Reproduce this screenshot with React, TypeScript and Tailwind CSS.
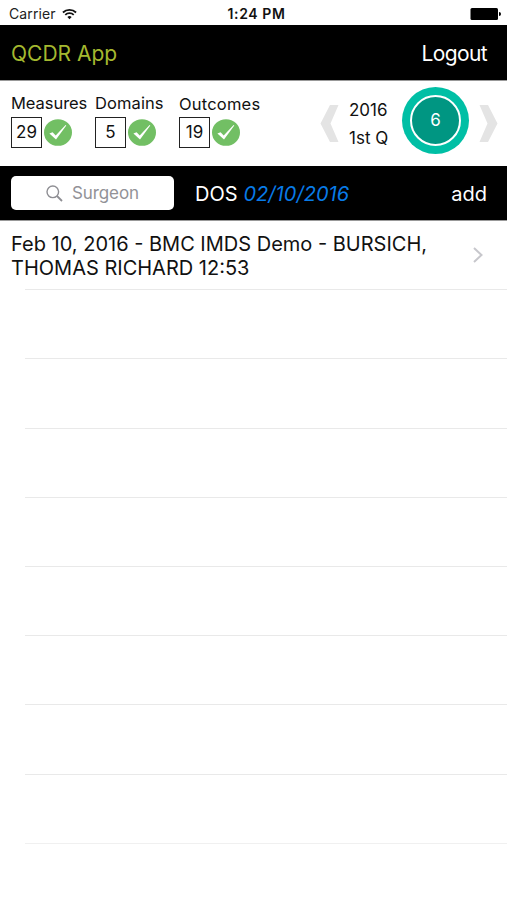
const stats = [
  { label: "Measures", value: 29, labelClass: "tracking-[-0.05px]" },
  { label: "Domains", value: 5, labelClass: "tracking-[0.1px]" },
  { label: "Outcomes", value: 19, labelClass: "relative top-px tracking-[0.2px]" },
];

const emptyRows = Array.from({ length: 8 }, (_, i) => i);

function StatusBar() {
  return (
    <div className="grid h-[25px] grid-cols-3 items-center pt-[2px] text-[14px] text-[#111]">
      <div className="flex items-center gap-1.5 pl-[9px]">
        <span className="tracking-[0.1px] text-[#222]">Carrier</span>
        <svg width="15" height="12" viewBox="0 0 16 12" fill="none" stroke="#111" strokeWidth="1.9">
          <path d="M1 4.4a9.9 9.9 0 0 1 14 0" />
          <path d="M3.5 7a6.4 6.4 0 0 1 9 0" />
          <path d="M8 11.6 5.7 9.2a3.3 3.3 0 0 1 4.6 0z" fill="#111" stroke="none" />
        </svg>
      </div>
      <span className="pl-1.5 text-center font-semibold tracking-[0.6px]">1:24 PM</span>
      <div className="flex justify-end pr-[6px]">
        <svg width="31" height="12" viewBox="0 0 31 12">
          <rect x="0.5" width="27.5" height="12" rx="1.5" fill="#000" />
          <path d="M29 4v4a2 2 0 0 0 0-4z" fill="#000" />
        </svg>
      </div>
    </div>
  );
}

function CheckBadge() {
  return (
    <svg width="28" height="27" viewBox="0 0 28 27">
      <ellipse cx="14" cy="13.5" rx="14" ry="13.3" fill="#72bf64" />
      <path d="M5.4 14.4 8.6 13.2l3.1 3.4L21.6 6l.7.6L12 20.4z" fill="#fff" />
    </svg>
  );
}

function PageArrow({ flip = false }: { flip?: boolean }) {
  return (
    <svg width="19" height="37" viewBox="0 0 19 37" className={flip ? "-scale-x-100" : ""}>
      <path d="M10 0h8.5l-8 18.5 8 18.5H10L.5 18.5z" fill="#e4e4e4" />
    </svg>
  );
}

function QuarterPicker() {
  return (
    <div className="flex items-start pr-[9px]">
      <div className="pt-[24px]">
        <PageArrow />
      </div>
      <div className="ml-[10px] w-[53px] pt-[15px] text-[17px] leading-[28px]">
        <p>2016</p>
        <p>1st Q</p>
      </div>
      <div className="mt-[6px] flex size-[67px] items-center justify-center rounded-full bg-[#00bfa5]">
        <div className="flex size-[51px] items-center justify-center rounded-full border-[2.5px] border-white bg-[#009682] text-[17px] text-white">
          6
        </div>
      </div>
      <div className="ml-[10px] pt-[24px]">
        <PageArrow flip />
      </div>
    </div>
  );
}

export default function App() {
  return (
    <div className="h-[900px] w-[507px] overflow-hidden bg-white font-['Inter',sans-serif] text-[#111]">
      <StatusBar />

      <header className="flex h-[55px] items-center justify-between bg-black pt-[2px] pr-[20px] pl-[11px] text-[21px]">
        <h1 className="text-[#a4b82f]">QCDR App</h1>
        <button className="tracking-[-0.6px] text-white">Logout</button>
      </header>

      <section className="flex h-[86px] justify-between border-t border-[#999]">
        <div className="flex pl-[11px]">
          {stats.map(({ label, value, labelClass }) => (
            <div key={label} className="w-[84px] pt-[12px]">
              <p className={`text-[16.5px] leading-[20px] whitespace-nowrap ${labelClass}`}>{label}</p>
              <div className="mt-1 flex items-center gap-[2px]">
                <span className="flex size-[31px] items-center justify-center border-[1.5px] border-[#222] text-[17px]">
                  {value}
                </span>
                <CheckBadge />
              </div>
            </div>
          ))}
        </div>
        <QuarterPicker />
      </section>

      <div className="flex h-[55px] items-center border-b border-[#999] bg-black pr-[20px] pl-[11px] text-[20px] text-white">
        <div className="flex h-[34px] w-[163px] items-center justify-center gap-[9px] rounded-[5px] bg-white text-[17px] text-[#929297]">
          <svg width="17" height="17" viewBox="0 0 17 17" fill="none" stroke="#8e8e93" strokeWidth="1.4">
            <circle cx="6.8" cy="6.8" r="5.8" />
            <path d="m11 11 5 5" strokeWidth="1.8" />
          </svg>
          <span className="pt-[2px] tracking-[-0.1px]">Surgeon</span>
        </div>
        <p className="ml-[21px] pt-[2px] tracking-[0.05px]">
          DOS <span className="text-[#087be8] italic">02/10/2016</span>
        </p>
        <button className="ml-auto pt-[2px]">add</button>
      </div>

      <ul>
        <li className="flex h-[68.25px] items-center justify-between pr-[24px] pl-[11px]">
          <p className="w-[430px] pt-[2px] text-[20px] leading-[24.5px]">
            Feb 10, 2016 - BMC IMDS Demo - BURSICH,
            <br />
            THOMAS RICHARD 12:53
          </p>
          <svg width="10" height="16" viewBox="0 0 10 16" fill="none" stroke="#c7c7cc" strokeWidth="2">
            <path d="m1 1 7.5 7L1 15" />
          </svg>
        </li>
        {emptyRows.map((row) => (
          <li key={row} className="ml-[25px] h-[69.2px] border-t border-[#e9e9e9]" />
        ))}
        <li className="ml-[25px] border-t border-[#f0f0f0]" />
      </ul>
    </div>
  );
}
